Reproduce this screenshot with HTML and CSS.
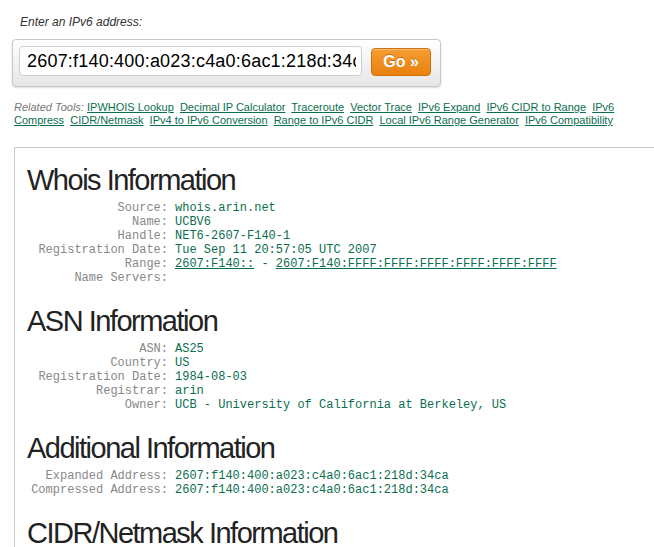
FILE: index.html
```html
<!DOCTYPE html>
<html>
<head>
<meta charset="utf-8">
<link rel="stylesheet" href="styles.css">
</head>
<body>
<div class="prompt">Enter an IPv6 address:</div>
<form class="search">
  <input class="addr" type="text" value="2607:f140:400:a023:c4a0:6ac1:218d:34ca">
  <button class="go" type="button">Go &raquo;</button>
</form>
<div class="related"><span class="rel-label">Related Tools:</span> <a href="#">IPWHOIS Lookup</a> <a href="#">Decimal IP Calculator</a> <a href="#">Traceroute</a> <a href="#">Vector Trace</a> <a href="#">IPv6 Expand</a> <a href="#">IPv6 CIDR to Range</a> <a href="#">IPv6 Compress</a> <a href="#">CIDR/Netmask</a> <a href="#">IPv4 to IPv6 Conversion</a> <a href="#">Range to IPv6 CIDR</a> <a href="#">Local IPv6 Range Generator</a> <a href="#">IPv6 Compatibility</a></div>
<div class="results">
  <h2>Whois Information</h2>
  <div class="kv">
    <div class="k">Source:</div><div class="v">whois.arin.net</div>
    <div class="k">Name:</div><div class="v">UCBV6</div>
    <div class="k">Handle:</div><div class="v">NET6-2607-F140-1</div>
    <div class="k">Registration Date:</div><div class="v">Tue Sep 11 20:57:05 UTC 2007</div>
    <div class="k">Range:</div><div class="v"><a href="#">2607:F140::</a> - <a href="#">2607:F140:FFFF:FFFF:FFFF:FFFF:FFFF:FFFF</a></div>
    <div class="k">Name Servers:</div><div class="v"></div>
  </div>
  <h2>ASN Information</h2>
  <div class="kv">
    <div class="k">ASN:</div><div class="v">AS25</div>
    <div class="k">Country:</div><div class="v">US</div>
    <div class="k">Registration Date:</div><div class="v">1984-08-03</div>
    <div class="k">Registrar:</div><div class="v">arin</div>
    <div class="k">Owner:</div><div class="v">UCB - University of California at Berkeley, US</div>
  </div>
  <h2>Additional Information</h2>
  <div class="kv">
    <div class="k">Expanded Address:</div><div class="v">2607:f140:400:a023:c4a0:6ac1:218d:34ca</div>
    <div class="k">Compressed Address:</div><div class="v">2607:f140:400:a023:c4a0:6ac1:218d:34ca</div>
  </div>
  <h2>CIDR/Netmask Information</h2>
</div>
</body>
</html>
```
FILE: styles.css
```css
html, body {
  margin: 0;
  padding: 0;
  overflow: hidden;
  background: #fff;
}
body {
  font-family: "Liberation Sans", Arial, sans-serif;
  color: #222;
}
.prompt {
  padding: 14px 0 0 20px;
  font-size: 12px;
  line-height: 16px;
  font-style: italic;
  color: #333;
}
.search {
  margin: 9px 0 0 12px;
  width: 429px;
  box-sizing: border-box;
  display: flex;
  align-items: flex-start;
  gap: 9px;
  padding: 6px 9px 10px 6px;
  border: 1px solid #c8c8c8;
  border-radius: 4px;
  background: linear-gradient(#ffffff, #e6e6e6);
  box-shadow: 0 1px 2px rgba(0,0,0,0.15);
}
.addr {
  width: 343px;
  height: 30px;
  box-sizing: border-box;
  margin: 0;
  padding: 0 5px 0 7px;
  border: 1px solid #cfcfcf;
  border-radius: 4px;
  background: #fff;
  font-family: "Liberation Sans", Arial, sans-serif;
  font-size: 18px;
  letter-spacing: 0.2px;
  color: #000;
  outline: none;
}
.go {
  margin: 2px 0 0 0;
  width: 60px;
  height: 28px;
  box-sizing: border-box;
  padding: 0;
  border: 1px solid #d2700e;
  border-radius: 4px;
  background: linear-gradient(#f59d32, #e8810f);
  box-shadow: inset 0 1px 0 rgba(255,255,255,0.35);
  color: #fff;
  font-family: "Liberation Sans", Arial, sans-serif;
  font-weight: bold;
  font-size: 16px;
  text-shadow: 0 -1px 0 rgba(150,70,0,0.5);
}
.related {
  margin-top: 14px;
  padding: 0 14px;
  font-size: 11px;
  line-height: 13px;
}
.rel-label {
  font-style: italic;
  color: #777;
}
.related a {
  color: #0b6e4f;
  text-decoration: underline;
  margin-right: 3px;
}
.results {
  margin: 20px 0 0 14px;
  border-top: 1px solid #c8c8c8;
  border-left: 1px solid #c8c8c8;
  padding: 16px 0 0 12px;
}
.results h2 {
  margin: 0 0 5px 0;
  font-size: 29px;
  line-height: 32px;
  font-weight: normal;
  letter-spacing: -1.5px;
  color: #222;
}
.kv {
  display: grid;
  grid-template-columns: 141px auto;
  column-gap: 7px;
  margin-bottom: 20px;
  font-family: "Liberation Mono", "Courier New", monospace;
  font-size: 12px;
  line-height: 14px;
}
.k {
  text-align: right;
  color: #888;
  white-space: nowrap;
}
.v {
  color: #0b6e4f;
  white-space: nowrap;
}
.v a {
  color: #0b6e4f;
  text-decoration: underline;
}
```
